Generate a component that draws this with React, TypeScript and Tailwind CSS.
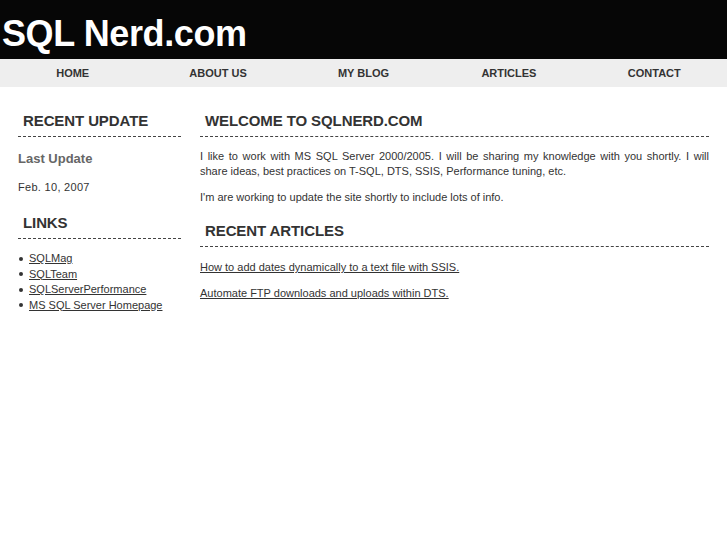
import React from "react";

const font = { fontFamily: '"Liberation Sans", Arial, sans-serif' };

function Heading({ children, className = "" }: { children: React.ReactNode; className?: string }) {
  return (
    <h2
      className={`text-[15px] leading-[18px] font-bold text-[#333] pl-[5px] pb-[6px] border-b border-dashed border-[#444] tracking-[-0.1px] ${className}`}
    >
      {children}
    </h2>
  );
}

export default function App() {
  const nav = ["HOME", "ABOUT US", "MY BLOG", "ARTICLES", "CONTACT"];
  const links = ["SQLMag", "SQLTeam", "SQLServerPerformance", "MS SQL Server Homepage"];
  return (
    <div className="w-[727px] h-[545px] bg-white" style={font}>
      <div className="h-[59px] bg-[#060606] flex items-center">
        <h1 className="text-white font-bold text-[36px] leading-none pl-[2px] tracking-[-0.4px] mt-[8px]">
          SQL Nerd.com
        </h1>
      </div>
      <div className="h-[28px] bg-[#eeeeee] grid grid-cols-5 items-center">
        {nav.map((n) => (
          <div key={n} className="text-center text-[11px] font-bold text-[#333] leading-none">
            {n}
          </div>
        ))}
      </div>
      <div className="flex gap-[19px] px-[18px] pt-[25px]">
        <div className="w-[163px] shrink-0">
          <Heading>RECENT UPDATE</Heading>
          <div className="mt-[14px] text-[13px] leading-[15px] font-bold text-[#666]">Last Update</div>
          <div className="mt-[15px] text-[11px] leading-[13px] text-[#333] tracking-[0.3px]">Feb. 10, 2007</div>
          <Heading className="mt-[20px]">LINKS</Heading>
          <ul className="mt-[12px] text-[11px] leading-[15.5px] text-[#333]">
            {links.map((l) => (
              <li key={l} className="flex items-center">
                <span className="w-[4px] h-[4px] rounded-full bg-[#333] ml-[1px] mr-[6px] shrink-0" />
                <a className="underline">{l}</a>
              </li>
            ))}
          </ul>
        </div>
        <div className="flex-1">
          <Heading>WELCOME TO SQLNERD.COM</Heading>
          <p className="mt-[12px] text-[11px] leading-[15px] text-[#333] text-justify">
            I like to work with MS SQL Server 2000/2005. I will be sharing my knowledge with you shortly. I will share
            ideas, best practices on T-SQL, DTS, SSIS, Performance tuning, etc.
          </p>
          <p className="mt-[11px] text-[11px] leading-[15px] text-[#333]">
            I'm are working to update the site shortly to include lots of info.
          </p>
          <Heading className="mt-[17px]">RECENT ARTICLES</Heading>
          <p className="mt-[13px] text-[11px] leading-[15px] text-[#333]">
            <a className="underline">How to add dates dynamically to a text file with SSIS.</a>
          </p>
          <p className="mt-[11px] text-[11px] leading-[15px] text-[#333]">
            <a className="underline">Automate FTP downloads and uploads within DTS.</a>
          </p>
        </div>
      </div>
    </div>
  );
}
